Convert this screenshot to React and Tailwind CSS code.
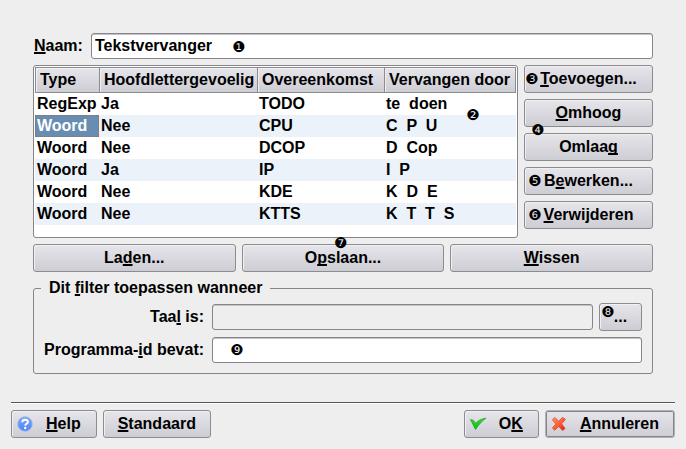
const rules = [
  ["RegExp", "Ja", "TODO", "te  doen"],
  ["Woord", "Nee", "CPU", "C  P  U"],
  ["Woord", "Nee", "DCOP", "D  Cop"],
  ["Woord", "Ja", "IP", "I  P"],
  ["Woord", "Nee", "KDE", "K  D  E"],
  ["Woord", "Nee", "KTTS", "K  T  T  S"],
];

const buttonBase =
  "relative h-7 rounded-[3px] border bg-linear-to-b from-[#e5e5ea] to-[#cdcdd4] whitespace-nowrap";
const buttonStyle = `${buttonBase} border-[#8b8b90] shadow-[inset_1px_1px_0_#f0f0f4]`;
const focusedButton = `${buttonBase} border-[#b0b0b4] shadow-[inset_0_0_0_1px_#85858a]`;
const fieldStyle =
  "h-[26px] w-full rounded-[3px] border border-[#85858a] px-[3px] shadow-[inset_0_1px_0_#c4c4c8] outline-none";
const footerButton = "flex items-center gap-[13px] pr-[15px]";

// Accelerator key of a label
function Key({ children }) {
  return (
    <span className="underline decoration-2 underline-offset-1 [text-decoration-skip-ink:none]">
      {children}
    </span>
  );
}

function Badge({ children, className }) {
  return (
    <span
      className={`pointer-events-none absolute z-10 flex size-3 items-center justify-center font-['DejaVu_Sans',sans-serif] text-[15px] leading-3 font-normal text-black ${className}`}
    >
      {children}
    </span>
  );
}

function HelpIcon() {
  return (
    <svg className="size-4" viewBox="0 0 16 16" aria-hidden="true">
      <defs>
        <linearGradient id="help" x1="0" y1="0" x2="0" y2="1">
          <stop offset="0" stopColor="#79a6ff" />
          <stop offset="1" stopColor="#4a86ff" />
        </linearGradient>
      </defs>
      <circle cx="8" cy="8" r="7.1" fill="url(#help)" stroke="#8aa8dc" strokeWidth=".9" />
      <path d="M5.2 6.2C5.3 4.5 6.5 3.7 8.1 3.7C9.8 3.7 10.9 4.6 10.9 5.9C10.9 7.8 8.3 7.8 8.2 9.6" fill="none" stroke="#fff" strokeWidth="1.9" />
      <circle cx="8.2" cy="12" r="1.2" fill="#fff" />
    </svg>
  );
}

function CheckIcon() {
  return (
    <svg className="size-4" viewBox="0 0 16 16" aria-hidden="true">
      <defs>
        <linearGradient id="check" x1="0" y1="0" x2="0" y2="1">
          <stop offset="0" stopColor="#3fdc3f" />
          <stop offset="1" stopColor="#00c400" />
        </linearGradient>
      </defs>
      <path d="M.4 3.6L3.2 4.2L5.6 7.2C8.2 4.7 11.4 2.8 15.8 2.2C11.8 5.2 8.4 8.8 5.6 13.4Z" fill="url(#check)" stroke="#169a16" strokeWidth=".7" strokeLinejoin="round" />
    </svg>
  );
}

function CrossIcon() {
  return (
    <svg className="size-4" viewBox="0 0 16 16" aria-hidden="true">
      <defs>
        <linearGradient id="cross" x1="0" y1="0" x2="1" y2="1">
          <stop offset="0" stopColor="#ff9a66" />
          <stop offset=".55" stopColor="#ff5a32" />
          <stop offset="1" stopColor="#e80c0c" />
        </linearGradient>
      </defs>
      <path d="M3.8 1.6L7.6 5.2L11.6 1.4L14.4 3.4L10.6 7.8L14 12.4L11.8 14.6L7.7 10.5L3.6 14.2L1.4 12L5 8L1.4 3.8Z" fill="url(#cross)" stroke="#d8432c" strokeWidth=".8" strokeLinejoin="round" />
    </svg>
  );
}

export default function App() {
  return (
    <div className="min-h-screen bg-[#eeeeee] pt-[33px] font-['Liberation_Sans',Arial,sans-serif] text-base leading-5 font-bold text-black">
      <main className="flex flex-col gap-1.5 px-[33px]">
        <div className="flex items-center gap-2">
          <label htmlFor="name" className="pl-px">
            <Key>N</Key>aam:
          </label>
          <div className="relative flex-1">
            <input id="name" defaultValue="Tekstvervanger" className={`${fieldStyle} block bg-white`} />
            <Badge className="top-2 left-[142px]">❶</Badge>
          </div>
        </div>

        <div className="flex gap-1.5">
          <div className="relative flex-1 rounded-[3px] border border-[#85858a] bg-white p-px">
            <table className="w-full table-fixed border-separate border-spacing-0 text-left">
              <colgroup>
                <col className="w-16" />
                <col className="w-[158px]" />
                <col className="w-[127px]" />
                <col />
              </colgroup>
              <thead>
                <tr className="h-[26px]">
                  {["Type", "Hoofdlettergevoelig", "Overeenkomst", "Vervangen door"].map((title) => (
                    <th
                      key={title}
                      className="border-y border-l border-[#8b8b90] bg-linear-to-b from-[#e5e5ea] to-[#cdcdd4] p-0 pl-1 whitespace-nowrap shadow-[inset_1px_1px_0_#f0f0f4] last:border-r"
                    >
                      {title}
                    </th>
                  ))}
                </tr>
              </thead>
              <tbody>
                {rules.map((rule, row) => (
                  <tr key={rule[2]} className="h-[22px] even:bg-[#ebf2f9]">
                    {rule.map((text, column) => (
                      <td
                        key={column}
                        className={`p-0 pl-0.5 whitespace-pre ${
                          row === 1 && column === 0
                            ? "bg-[#678db2] text-white outline-1 -outline-offset-1 outline-dotted outline-[#98724d]"
                            : ""
                        }`}
                      >
                        {text}
                      </td>
                    ))}
                  </tr>
                ))}
              </tbody>
            </table>
            <Badge className="top-[43px] right-[38px]">❷</Badge>
          </div>

          <div className="flex w-[129px] flex-col gap-1.5 pb-[9px]">
            <button type="button" className={buttonStyle}>
              <Badge className="top-[7px] left-px">❸</Badge>
              <Key>T</Key>oevoegen...
            </button>
            <button type="button" className={buttonStyle}>
              <Key>O</Key>mhoog
              <Badge className="-bottom-[10px] left-[7px]">❹</Badge>
            </button>
            <button type="button" className={buttonStyle}>
              Omlaa<Key>g</Key>
            </button>
            <button type="button" className={buttonStyle}>
              <Badge className="top-[7px] left-1">❺</Badge>B<Key>e</Key>werken...
            </button>
            <button type="button" className={buttonStyle}>
              <Badge className="top-[7px] left-1">❻</Badge>
              <Key>V</Key>erwijderen
            </button>
          </div>
        </div>

        <div className="grid grid-cols-3 gap-1.5">
          <button type="button" className={buttonStyle}>
            La<Key>d</Key>en...
          </button>
          <button type="button" className={buttonStyle}>
            <Badge className="-top-2 left-[92px]">❼</Badge>O<Key>p</Key>slaan...
          </button>
          <button type="button" className={buttonStyle}>
            <Key>W</Key>issen
          </button>
        </div>

        <fieldset className="rounded-[3px] border border-[#85858a] px-[10px] pb-[10px]">
          <legend className="-ml-[3px] px-2">
            Dit <Key>f</Key>ilter toepassen wanneer
          </legend>
          <div className="grid grid-cols-[auto_1fr] items-center gap-x-2 gap-y-1.5 pt-[5px]">
            <label htmlFor="language" className="text-right">
              Taa<Key>l</Key> is:
            </label>
            <div className="flex items-center gap-1.5">
              <input id="language" readOnly className={`${fieldStyle} flex-1 bg-[#eeeeee]`} />
              <button type="button" aria-label="Taal kiezen" className={`${buttonStyle} w-[43px]`}>
                <Badge className="top-0.5 left-0.5">❽</Badge>...
              </button>
            </div>
            <label htmlFor="program" className="text-right">
              Programma-<Key>i</Key>d bevat:
            </label>
            <div className="relative">
              <input id="program" className={`${fieldStyle} block bg-white`} />
              <Badge className="top-[7px] left-[19px]">❾</Badge>
            </div>
          </div>
        </fieldset>
      </main>

      <footer className="mt-7 px-[11px]">
        <div className="mb-1.5 h-0.5 border-t border-b border-t-[#555555] border-b-white" />
        <div className="flex gap-1.5">
          <button type="button" className={`${buttonStyle} ${footerButton} pl-[5px]`}>
            <HelpIcon />
            <span>
              <Key>H</Key>elp
            </span>
          </button>
          <button type="button" className={`${buttonStyle} px-[14px]`}>
            <Key>S</Key>tandaard
          </button>
          <button type="button" className={`${buttonStyle} ${footerButton} ml-auto pl-[5px]`}>
            <CheckIcon />
            <span>
              O<Key>K</Key>
            </span>
          </button>
          <button type="button" className={`${focusedButton} ${footerButton} pl-[5px]`}>
            <CrossIcon />
            <span>
              <Key>A</Key>nnuleren
            </span>
          </button>
        </div>
      </footer>
    </div>
  );
}
